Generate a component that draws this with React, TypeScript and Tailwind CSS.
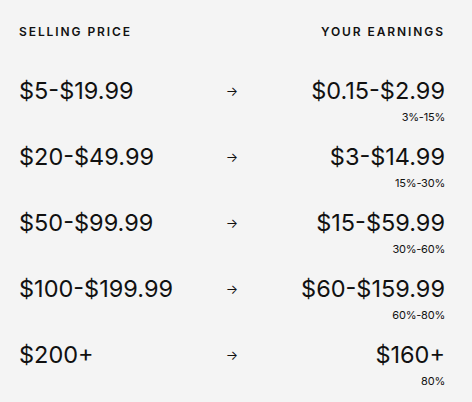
const rows = [
  { price: '$5-$19.99', earn: '$0.15-$2.99', pct: '3%-15%' },
  { price: '$20-$49.99', earn: '$3-$14.99', pct: '15%-30%' },
  { price: '$50-$99.99', earn: '$15-$59.99', pct: '30%-60%' },
  { price: '$100-$199.99', earn: '$60-$159.99', pct: '60%-80%' },
  { price: '$200+', earn: '$160+', pct: '80%' },
]

export default function App() {
  return (
    <main className="min-h-screen w-full bg-[#f4f4f4] pl-[19px] pr-[27px] pt-[26px] text-[#111] font-['Inter',sans-serif]">
      <div className="grid grid-cols-[1fr_auto_1fr] text-[12px] leading-[12px] font-semibold tracking-[0.16em]">
        <span>SELLING PRICE</span>
        <span />
        <span className="text-right">YOUR EARNINGS</span>
      </div>
      <div className="mt-[39px] flex flex-col gap-[19px]">
        {rows.map((r) => (
          <div key={r.price} className="grid grid-cols-[1fr_auto_1fr]">
            <span className="text-[23.5px] leading-[28px]">{r.price}</span>
            <span className="text-[13px] leading-[28px] w-4 text-center">→</span>
            <div className="flex flex-col items-end">
              <span className="text-[23.5px] leading-[28px]">{r.earn}</span>
              <span className="mt-[5px] text-[11px] leading-[14px] tracking-[-0.02em]">{r.pct}</span>
            </div>
          </div>
        ))}
      </div>
    </main>
  )
}
